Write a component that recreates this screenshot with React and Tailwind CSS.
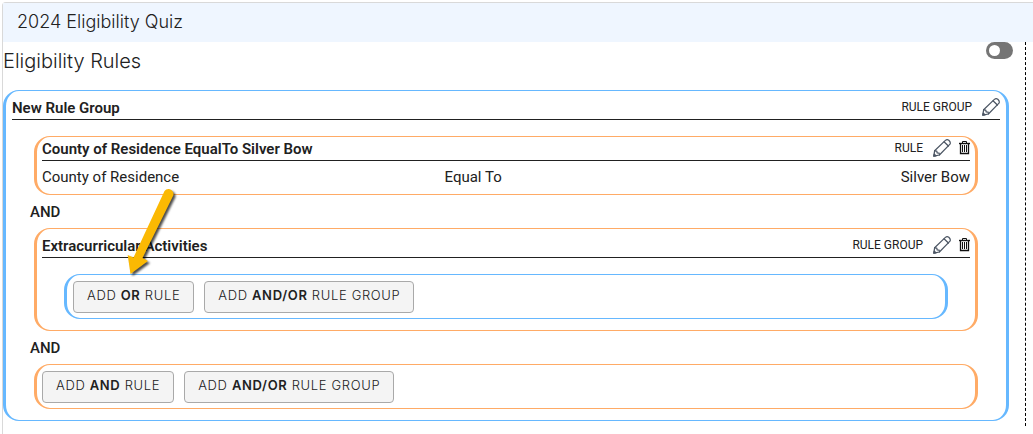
import React from "react";
import { useState } from "react";

function PencilIcon() {
  return (
    <svg
      viewBox="0 0 18 18"
      className="h-[18px] w-[18px]"
      fill="none"
      stroke="#4b5563"
      strokeWidth="1.2"
      strokeLinejoin="round"
      strokeLinecap="round"
    >
      <path d="M0.8 17.2 L1.6 11.8 L12.4 1.4 Q14 0 15.8 1.2 Q18 3.2 17 5.2 L6.4 16 Z" />
      <path d="M1.6 11.8 L3.8 12.2 L4.2 14 L6.2 14.2 L6.4 16" />
      <path d="M11 2.8 L15.4 7" />
      <path d="M0.8 17.2 L1.2 15 L3 16.8 Z" fill="#4b5563" />
    </svg>
  );
}

function TrashIcon() {
  return (
    <svg
      viewBox="0 0 11 14"
      className="h-[14px] w-[11px]"
      fill="none"
      stroke="#111111"
      strokeWidth="1"
    >
      <path d="M0 2.5 H11" strokeWidth="1.4" />
      <path d="M3.5 2.5 V0.5 H7.5 V2.5" />
      <path d="M1.5 2.5 V12.5 H9.5 V2.5" strokeWidth="1.3" />
      <path d="M3.5 4 V11 M5.5 4 V11 M7.5 4 V11" />
    </svg>
  );
}

function GroupHeader({ title, type, removable }) {
  return (
    <div className="flex items-center justify-between border-b border-[#212121] h-6">
      <div className="text-[15px] leading-6 font-semibold">{title}</div>
      <div className="flex items-center gap-2 pb-px">
        <span className="text-xs mr-0.5">{type}</span>
        <button aria-label={"Edit " + title} className="cursor-pointer">
          <PencilIcon />
        </button>
        {removable && (
          <button aria-label={"Delete " + title} className="cursor-pointer">
            <TrashIcon />
          </button>
        )}
      </div>
    </div>
  );
}

function AddButton({ children }) {
  return (
    <button className="h-8 px-[13px] pb-0.5 rounded-sm border border-[#a9a9a9] bg-[#f4f4f4] font-['Inter',sans-serif] text-[13px] font-light tracking-wider cursor-pointer hover:bg-[#e8e8e8]">
      {children}
    </button>
  );
}

function Arrow() {
  return (
    <svg
      viewBox="0 0 60 90"
      className="absolute left-[122px] top-[187px] h-[90px] w-[60px] pointer-events-none"
    >
      <path
        d="M42.5 4 Q44 1.8 47 2 Q52 3.4 51.5 8 L20.5 71 L26 74 L8.5 87 L5.7 68 L11.5 70.5 Z"
        fill="#fbb903"
        className="drop-shadow-[2px_2px_1px_rgba(0,0,0,0.7)]"
      />
    </svg>
  );
}

export default function App() {
  const [enabled, setEnabled] = useState(false);

  return (
    <div className="relative min-h-screen pt-0.5 pl-0.5 flex flex-col bg-white text-[#212121] font-['Roboto',sans-serif]">
      <div className="flex-1 border-l border-t border-[#d9d9d9] rounded-tl">
        <div className="h-[39px] flex items-center pl-3.5 pb-0.5 bg-[#eff6ff] font-['Inter',sans-serif] text-lg font-light">
          2024 Eligibility Quiz
        </div>
        <div className="mr-[7px] pr-4 pb-[5px] border-r border-dashed border-black">
          <div className="flex justify-between items-start h-12">
            <h1 className="font-['Inter',sans-serif] text-xl leading-[38px] font-light">
              Eligibility Rules
            </h1>
            <label className="-mr-1 flex cursor-pointer">
              <input
                type="checkbox"
                aria-label="Enable rules"
                className="peer sr-only"
                checked={enabled}
                onChange={(e) => setEnabled(e.target.checked)}
              />
              <span className="h-[17px] w-[27px] p-[3px] rounded-full bg-[#757575] flex peer-checked:justify-end peer-checked:bg-[#66b5ff]">
                <span className="h-[11px] w-[11px] rounded-full bg-white" />
              </span>
            </label>
          </div>

          <div className="border-x-3 border-y border-[#66b8ff] rounded-2xl px-1.5 pt-[5px] pb-[11px]">
            <GroupHeader title="New Rule Group" type="RULE GROUP" />

            <div className="px-[22px] pt-4">
              <div className="border-x-3 border-y border-[#ffab66] rounded-2xl px-[5px] pb-px">
                <GroupHeader
                  title="County of Residence EqualTo Silver Bow"
                  type="RULE"
                  removable
                />
                <div className="grid grid-cols-[15fr_17fr_auto] py-1 text-[15px] leading-6">
                  <div>County of Residence</div>
                  <div>Equal To</div>
                  <div>Silver Bow</div>
                </div>
              </div>

              <div className="-ml-1 pt-[5px] pb-1 text-[15px] leading-6 font-medium">
                AND
              </div>

              <div className="border-x-3 border-y border-[#ffab66] rounded-2xl px-[5px] pt-[5px] pb-[11px]">
                <GroupHeader
                  title="Extracurricular Activities"
                  type="RULE GROUP"
                  removable
                />
                <div className="mt-4 mx-[22px] flex gap-2.5 border-x-3 border-y border-[#66b8ff] rounded-2xl px-1.5 pt-1.5 pb-[5px]">
                  <AddButton>
                    ADD <b className="font-semibold">OR</b> RULE
                  </AddButton>
                  <AddButton>
                    ADD <b className="font-semibold">AND/OR</b> RULE GROUP
                  </AddButton>
                </div>
              </div>

              <div className="-ml-1 pt-[5px] pb-1 text-[15px] leading-6 font-medium">
                AND
              </div>

              <div className="flex gap-2.5 border-x-3 border-y border-[#ffab66] rounded-2xl px-[5px] pt-1.5 pb-[5px]">
                <AddButton>
                  ADD <b className="font-semibold">AND</b> RULE
                </AddButton>
                <AddButton>
                  ADD <b className="font-semibold">AND/OR</b> RULE GROUP
                </AddButton>
              </div>
            </div>
          </div>
        </div>
      </div>
      <Arrow />
    </div>
  );
}
